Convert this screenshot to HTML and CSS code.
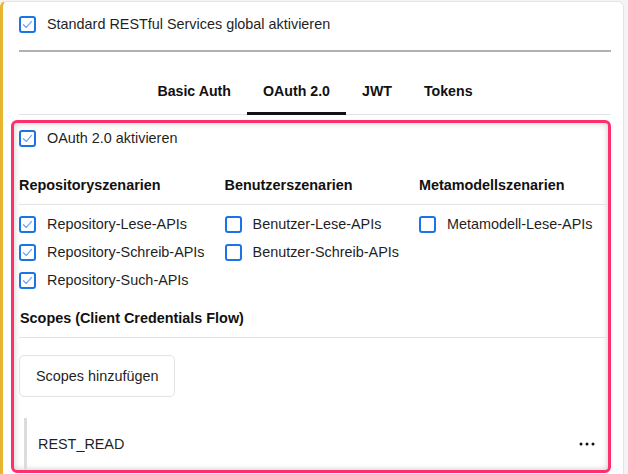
FILE: index.html
```html
<!DOCTYPE html>
<html lang="de">
<head>
<meta charset="utf-8">
<title>RESTful Services</title>
<link rel="stylesheet" href="styles.css">
</head>
<body>
<div class="card">
  <label class="check-row top-row">
    <span class="cb on"><svg viewBox="0 0 14 14"><path d="M2.6 7.2 L5.8 10.2 L11.4 3.6"/></svg></span>
    <span>Standard RESTful Services global aktivieren</span>
  </label>
  <div class="rule"></div>

  <nav class="tabs">
    <span class="tab">Basic Auth</span>
    <span class="tab active">OAuth 2.0</span>
    <span class="tab">JWT</span>
    <span class="tab">Tokens</span>
  </nav>

  <section class="panel">
    <label class="check-row">
      <span class="cb on"><svg viewBox="0 0 14 14"><path d="M2.6 7.2 L5.8 10.2 L11.4 3.6"/></svg></span>
      <span>OAuth 2.0 aktivieren</span>
    </label>

    <div class="scen">
      <div class="head">Repositoryszenarien</div>
      <div class="head">Benutzerszenarien</div>
      <div class="head">Metamodellszenarien</div>
      <div class="head"></div>
      <div class="divider"></div>

      <div class="list">
        <label class="check-row"><span class="cb on"><svg viewBox="0 0 14 14"><path d="M2.6 7.2 L5.8 10.2 L11.4 3.6"/></svg></span><span>Repository-Lese-APIs</span></label>
        <label class="check-row"><span class="cb on"><svg viewBox="0 0 14 14"><path d="M2.6 7.2 L5.8 10.2 L11.4 3.6"/></svg></span><span>Repository-Schreib-APIs</span></label>
        <label class="check-row"><span class="cb on"><svg viewBox="0 0 14 14"><path d="M2.6 7.2 L5.8 10.2 L11.4 3.6"/></svg></span><span>Repository-Such-APIs</span></label>
      </div>
      <div class="list">
        <label class="check-row"><span class="cb"></span><span>Benutzer-Lese-APIs</span></label>
        <label class="check-row"><span class="cb"></span><span>Benutzer-Schreib-APIs</span></label>
      </div>
      <div class="list">
        <label class="check-row"><span class="cb"></span><span>Metamodell-Lese-APIs</span></label>
      </div>
      <div class="list"></div>
    </div>

    <div class="section-head">Scopes (Client Credentials Flow)</div>

    <button class="btn">Scopes hinzufügen</button>

    <div class="item">
      <span>REST_READ</span>
      <svg class="dots" viewBox="0 0 16 4"><circle cx="2" cy="2" r="1.5"/><circle cx="8" cy="2" r="1.5"/><circle cx="14" cy="2" r="1.5"/></svg>
    </div>
  </section>
</div>
</body>
</html>
```
FILE: styles.css
```css
* { box-sizing: border-box; }
html, body { margin: 0; padding: 0; }
body {
  background: #f4f4f4;
  font-family: "Liberation Sans", Arial, sans-serif;
  font-size: 14.4px;
  color: #1f1f1f;
  height: 474px;
  overflow: hidden;
}
.card {
  margin: 1px 4px 0 0;
  background: #fff;
  border: 1px solid #e4e4e4;
  border-left: 3px solid #e7b630;
  border-radius: 6px 6px 0 0;
  padding: 10px 12px 0 16px;
  min-height: 520px;
}
.check-row {
  display: flex;
  align-items: center;
  gap: 11px;
  height: 20px;
  line-height: 20px;
  white-space: nowrap;
}
.cb {
  flex: 0 0 auto;
  width: 17px;
  height: 17px;
  border: 2px solid #1b74e6;
  border-radius: 3px;
  background: #fff;
  display: flex;
  align-items: center;
  justify-content: center;
}
.cb svg { width: 13px; height: 13px; }
.cb svg path {
  fill: none;
  stroke: #6ea6ec;
  stroke-width: 1.3;
  stroke-linecap: round;
  stroke-linejoin: round;
}
.top-row { height: 24px; }
.rule {
  height: 2px;
  background: #b0b0b0;
  margin-top: 14px;
}
.tabs {
  display: flex;
  justify-content: center;
  margin-top: 13px;
  border-bottom: 1px solid #e3e3e3;
}
.tab {
  font-weight: bold;
  font-size: 14.2px;
  line-height: 16px;
  padding: 18px 16px 13px;
  color: #111;
  border-bottom: 3px solid transparent;
  margin-bottom: -1px;
}
.tab.active { border-bottom-color: #111; }
.panel {
  margin: 5px 0 0 -8px;
  height: 353px;
  overflow: hidden;
  border: 3px solid #fd2f6c;
  border-radius: 6px;
  box-shadow: inset 0 0 6px rgba(0,0,0,0.22);
  padding: 5px 0 0 5px;
}
.scen {
  display: grid;
  grid-template-columns: auto auto auto 1fr;
  column-gap: 20px;
  margin-top: 29px;
}
.head {
  font-weight: bold;
  font-size: 14.4px;
  line-height: 16px;
  color: #111;
  padding-bottom: 11px;
  white-space: nowrap;
}
.divider {
  grid-column: 1 / -1;
  height: 1px;
  background: #e3e3e3;
}
.list {
  display: flex;
  flex-direction: column;
  gap: 8px;
  padding-top: 9px;
}
.section-head {
  font-weight: bold;
  font-size: 14.4px;
  line-height: 16px;
  color: #111;
  margin-top: 20px;
  padding: 0 0 11px 1px;
  border-bottom: 1px solid #e3e3e3;
}
.btn {
  display: block;
  margin-top: 17px;
  height: 42px;
  padding: 0 16px;
  background: #fff;
  border: 1px solid #e2e2e2;
  border-radius: 5px;
  font-family: inherit;
  font-size: 14.4px;
  color: #1f1f1f;
}
.item {
  margin: 21px 13px 0 5px;
  border-left: 3px solid #dcdcdc;
  padding: 18px 0 20px 11px;
  line-height: 16px;
  display: flex;
  justify-content: space-between;
  align-items: flex-start;
  min-height: 80px;
}
.dots {
  width: 16px;
  height: 4px;
  margin-top: 6px;
  fill: #111;
}
```
